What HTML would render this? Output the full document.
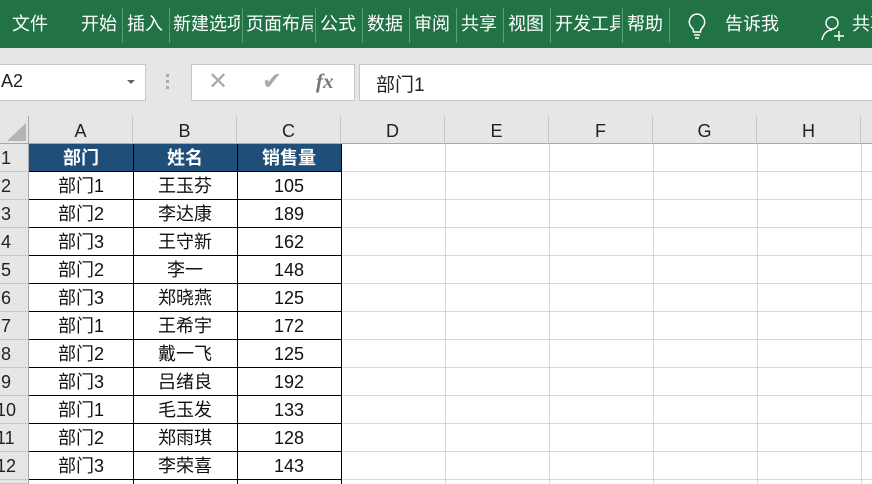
<!DOCTYPE html><html><head><meta charset="utf-8"><style>
*{margin:0;padding:0;box-sizing:border-box}
html,body{width:872px;height:484px;overflow:hidden}
body{background:#fff;font-family:"Liberation Sans","Noto Sans CJK SC",sans-serif;position:relative}
.a{position:absolute}
.top{left:0;top:0;width:872px;height:48px;background:#217346}
.t{position:absolute;top:12px;color:#fff;font-size:18px;line-height:24px;white-space:nowrap;overflow:hidden}
.sep{position:absolute;top:8px;width:1px;height:35px;background:#5c9c77}
.box{position:absolute;top:64px;height:37px;background:#fff;border:1px solid #c6c6c6}
.ch{position:absolute;top:116px;height:28px;background:#e6e6e6;border-right:1px solid #c8c8c8;border-bottom:1px solid #a8a8a8;text-align:center;font-size:18px;line-height:30px;color:#222}
.rh{position:absolute;left:0;width:29px;height:28px;background:#e6e6e6;border-bottom:1px solid #c8c8c8;border-right:1px solid #a8a8a8;font-size:18px;line-height:28px;color:#222;text-indent:1px;white-space:nowrap;overflow:hidden}
.cell{position:absolute;height:28px;text-align:center;font-size:18px;line-height:29px;color:#111}
</style></head><body>
<div class="a" style="left:0;top:0;width:872px;height:144px;background:#e6e6e6"></div>
<div class="a top"></div>
<div class="t" style="left:12px">文件</div>
<div class="t" style="left:81px">开始</div><div class="sep" style="left:122px"></div>
<div class="t" style="left:127px">插入</div><div class="sep" style="left:169px"></div>
<div class="t" style="left:173px;width:67px">新建选项</div><div class="sep" style="left:242px"></div>
<div class="t" style="left:246px;width:67px">页面布局</div><div class="sep" style="left:315px"></div>
<div class="t" style="left:320px">公式</div><div class="sep" style="left:362px"></div>
<div class="t" style="left:367px">数据</div><div class="sep" style="left:409px"></div>
<div class="t" style="left:414px">审阅</div><div class="sep" style="left:456px"></div>
<div class="t" style="left:461px">共享</div><div class="sep" style="left:503px"></div>
<div class="t" style="left:508px">视图</div><div class="sep" style="left:550px"></div>
<div class="t" style="left:555px;width:65px">开发工具</div><div class="sep" style="left:622px"></div>
<div class="t" style="left:627px">帮助</div><div class="sep" style="left:669px"></div>
<svg class="a" style="left:686px;top:12px" width="22" height="28" viewBox="0 0 22 28"><path d="M11 2a8 8 0 0 0-5 14c1 1 1.5 2.5 1.5 4h7c0-1.5.5-3 1.5-4A8 8 0 0 0 11 2z" fill="none" stroke="#fff" stroke-width="1.5"/><path d="M8 23h6M9 26h4" stroke="#fff" stroke-width="1.5"/></svg>
<div class="t" style="left:725px">告诉我</div>
<svg class="a" style="left:820px;top:14px" width="26" height="28" viewBox="0 0 26 28"><circle cx="12" cy="9" r="6" fill="none" stroke="#fff" stroke-width="1.4"/><path d="M2 26c1-6 5-10 10-10" fill="none" stroke="#fff" stroke-width="1.4"/><path d="M19 17v10M14 22h10" stroke="#fff" stroke-width="1.4"/></svg>
<div class="t" style="left:852px">共享</div>
<div class="box" style="left:-2px;width:148px"></div>
<div class="a" style="left:1px;top:71px;font-size:18px;color:#222">A2</div>
<div class="a" style="left:127px;top:80px;width:0;height:0;border-left:4px solid transparent;border-right:4px solid transparent;border-top:4px solid #666"></div>
<div class="a" style="left:166px;top:74px;width:3px;height:3px;background:#aaa;box-shadow:0 6px #aaa,0 12px #aaa"></div>
<div class="box" style="left:191px;width:164px"></div>
<div class="a" style="left:208px;top:69px;font-size:24px;color:#aaa;line-height:26px">✕</div>
<div class="a" style="left:262px;top:69px;font-size:24px;color:#aaa;line-height:26px">✔</div>
<div class="a" style="left:316px;top:69px;font-size:21px;color:#777;font-family:'Liberation Serif',serif;font-style:italic;font-weight:bold">fx</div>
<div class="box" style="left:359px;width:520px"></div>
<div class="a" style="left:376px;top:70px;font-size:19px;color:#222">部门1</div>
<div class="a" style="left:0;top:116px;width:29px;height:28px;background:#e6e6e6;border-right:1px solid #a8a8a8;border-bottom:1px solid #a8a8a8"></div>
<svg class="a" style="left:5px;top:122px" width="22" height="20"><path d="M21 1V19H2z" fill="#b4b4b4"/></svg>
<div class="ch" style="left:29px;width:104px">A</div>
<div class="ch" style="left:133px;width:104px">B</div>
<div class="ch" style="left:237px;width:104px">C</div>
<div class="ch" style="left:341px;width:104px">D</div>
<div class="ch" style="left:445px;width:104px">E</div>
<div class="ch" style="left:549px;width:104px">F</div>
<div class="ch" style="left:653px;width:104px">G</div>
<div class="ch" style="left:757px;width:104px">H</div>
<div class="ch" style="left:861px;width:20px"></div>
<svg class="a" style="left:29px;top:144px" width="843" height="340">
<g stroke="#d8d8d8" stroke-width="1">
<path d="M416.5 0V340M520.5 0V340M624.5 0V340M728.5 0V340M832.5 0V340"/>
<path d="M312 27.5H843M312 55.5H843M312 83.5H843M312 111.5H843M312 139.5H843M312 167.5H843M312 195.5H843M312 223.5H843M312 251.5H843M312 279.5H843M312 307.5H843M312 335.5H843"/>
</g>
<rect x="0" y="0" width="312" height="27" fill="#1f4e79"/>
<g stroke="#000" stroke-width="1">
<path d="M0 27.5H312M0 55.5H312M0 83.5H312M0 111.5H312M0 139.5H312M0 167.5H312M0 195.5H312M0 223.5H312M0 251.5H312M0 279.5H312M0 307.5H312M0 335.5H312"/>
<path d="M104.5 0V340M208.5 0V340M312.5 0V340"/>
</g>
</svg>
<div class="cell" style="left:29px;top:144px;width:104px;color:#fff;font-weight:bold">部门</div>
<div class="cell" style="left:133px;top:144px;width:104px;color:#fff;font-weight:bold">姓名</div>
<div class="cell" style="left:237px;top:144px;width:104px;color:#fff;font-weight:bold">销售量</div>
<div class="rh" style="top:144px">1</div>
<div class="rh" style="top:172px">2</div><div class="cell" style="left:29px;top:172px;width:104px">部门1</div><div class="cell" style="left:133px;top:172px;width:104px">王玉芬</div><div class="cell" style="left:237px;top:172px;width:104px">105</div>
<div class="rh" style="top:200px">3</div><div class="cell" style="left:29px;top:200px;width:104px">部门2</div><div class="cell" style="left:133px;top:200px;width:104px">李达康</div><div class="cell" style="left:237px;top:200px;width:104px">189</div>
<div class="rh" style="top:228px">4</div><div class="cell" style="left:29px;top:228px;width:104px">部门3</div><div class="cell" style="left:133px;top:228px;width:104px">王守新</div><div class="cell" style="left:237px;top:228px;width:104px">162</div>
<div class="rh" style="top:256px">5</div><div class="cell" style="left:29px;top:256px;width:104px">部门2</div><div class="cell" style="left:133px;top:256px;width:104px">李一</div><div class="cell" style="left:237px;top:256px;width:104px">148</div>
<div class="rh" style="top:284px">6</div><div class="cell" style="left:29px;top:284px;width:104px">部门3</div><div class="cell" style="left:133px;top:284px;width:104px">郑晓燕</div><div class="cell" style="left:237px;top:284px;width:104px">125</div>
<div class="rh" style="top:312px">7</div><div class="cell" style="left:29px;top:312px;width:104px">部门1</div><div class="cell" style="left:133px;top:312px;width:104px">王希宇</div><div class="cell" style="left:237px;top:312px;width:104px">172</div>
<div class="rh" style="top:340px">8</div><div class="cell" style="left:29px;top:340px;width:104px">部门2</div><div class="cell" style="left:133px;top:340px;width:104px">戴一飞</div><div class="cell" style="left:237px;top:340px;width:104px">125</div>
<div class="rh" style="top:368px">9</div><div class="cell" style="left:29px;top:368px;width:104px">部门3</div><div class="cell" style="left:133px;top:368px;width:104px">吕绪良</div><div class="cell" style="left:237px;top:368px;width:104px">192</div>
<div class="rh" style="top:396px;text-indent:-4px">10</div><div class="cell" style="left:29px;top:396px;width:104px">部门1</div><div class="cell" style="left:133px;top:396px;width:104px">毛玉发</div><div class="cell" style="left:237px;top:396px;width:104px">133</div>
<div class="rh" style="top:424px;text-indent:-4px">11</div><div class="cell" style="left:29px;top:424px;width:104px">部门2</div><div class="cell" style="left:133px;top:424px;width:104px">郑雨琪</div><div class="cell" style="left:237px;top:424px;width:104px">128</div>
<div class="rh" style="top:452px;text-indent:-4px">12</div><div class="cell" style="left:29px;top:452px;width:104px">部门3</div><div class="cell" style="left:133px;top:452px;width:104px">李荣喜</div><div class="cell" style="left:237px;top:452px;width:104px">143</div>
<div class="rh" style="top:480px;height:4px"></div>
</body></html>
